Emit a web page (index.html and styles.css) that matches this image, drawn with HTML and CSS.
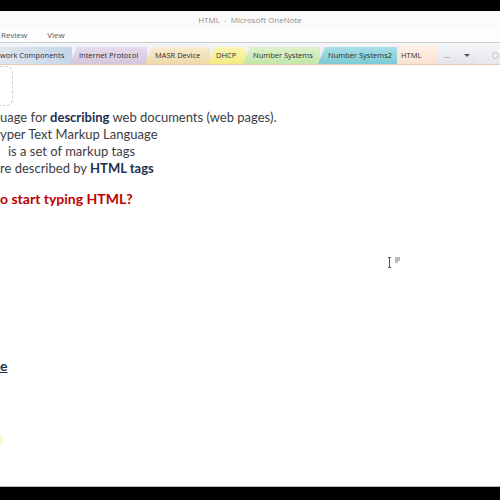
FILE: index.html
```html
<!DOCTYPE html>
<html>
<head>
<meta charset="utf-8">
<link rel="stylesheet" href="styles.css">
</head>
<body>
<div class="screen">
  <div class="blackbar"></div>
  <div class="titlebar">HTML&nbsp; - &nbsp;Microsoft OneNote</div>
  <div class="menubar"><span class="menu">Review</span><span class="menu">View</span></div>
  <div class="tabs">
    <div class="tab t-net first">work Components</div>
    <div class="tab t-ip">Internet Protocol</div>
    <div class="tab t-masr">MASR Device</div>
    <div class="tab t-dhcp">DHCP</div>
    <div class="tab t-ns">Number Systems</div>
    <div class="tab t-ns2">Number Systems2</div>
    <div class="tab t-html">HTML</div>
    <div class="tab t-more">...<span class="arrow"></span></div>
    <div class="tab t-new"><span class="dot"></span></div>
  </div>
  <div class="page">
    <div class="titlebox"></div>
    <div class="lines">
      <p class="line">uage for <b>describing</b> web documents (web pages).</p>
      <p class="line">yper Text Markup Language</p>
      <p class="line indent">is a set of markup tags</p>
      <p class="line">re described by <b>HTML tags</b></p>
      <p class="question">o start typing HTML?</p>
    </div>
    <div class="cursor">
      <svg width="14" height="13" viewBox="0 0 14 13"><path d="M1 1.5h3M2.5 1.5v10M1 11.5h3" stroke="#555" stroke-width="1" fill="none"/><path d="M8 2h5M8 4h5M8 6h3" stroke="#777" stroke-width="1.2"/></svg>
    </div>
    <p class="link">e</p>
    <div class="smudge"></div>
  </div>
  <div class="bottombar"></div>
</div>
</body>
</html>
```
FILE: styles.css
```css
html, body { margin: 0; padding: 0; background: #000; }
.screen {
  width: 500px; height: 500px; overflow: hidden;
  display: flex; flex-direction: column; background: #fff;
  font-family: "Segoe UI", "Open Sans", "DejaVu Sans", sans-serif;
}
.blackbar { height: 11px; background: #000; flex: none; }
.titlebar {
  height: 17px; flex: none; background: #fbfbfb;
  text-align: center; font-size: 8px; line-height: 17px; color: #8c8c8c;
}
.menubar {
  height: 14px; flex: none; background: #fdfdfd;
  display: flex; gap: 20px; padding-left: 1px;
  font-size: 8px; line-height: 14px; color: #5a5a5a;
  border-bottom: 1px solid #c9ccd1;
}
.tabs {
  height: 19px; flex: none; display: flex; align-items: flex-end;
  background: linear-gradient(#f4f5f7, #e6e8ec);
  border-bottom: 1px solid #efc9ac;
  padding-top: 2px;
}
.tab {
  height: 17px; flex: none; font-size: 7.5px; line-height: 17px; color: #2e2e2e;
  padding: 0 0 0 9px; margin-right: -2px; white-space: nowrap; overflow: hidden;
  clip-path: polygon(0 100%, 7px 0, 100% 0, 100% 100%);
  box-sizing: border-box;
}
.tab.first { clip-path: none; padding-left: 0; width: 72px; }
.t-net { background: linear-gradient(90deg, #dfe6ee, #c3d6ea); }
.t-ip { width: 77px; background: linear-gradient(#e6dcec, #d4c5dc); padding-left: 9px; }
.t-masr { width: 65px; background: linear-gradient(#f8ecd0, #f0d8aa); padding-left: 10px; }
.t-dhcp { width: 37px; background: linear-gradient(#fbf6b4, #f3ea82); padding-left: 8px; }
.t-ns { width: 77px; background: linear-gradient(#def2cc, #c4e6a8); padding-left: 10px; }
.t-ns2 { width: 79px; background: linear-gradient(#a9dfe8, #7ccad6); padding-left: 10px; }
.t-html { width: 43px; height: 19px; padding-top: 2px; background: linear-gradient(#fdf1e8, #fbe2d0); padding-left: 6px; clip-path: none; }
.t-more {
  width: 40px; background: linear-gradient(#f2f3f5, #e3e5e9); color: #666;
  padding-left: 8px; display: flex; align-items: center; gap: 14px;
}
.arrow { width: 0; height: 0; border-left: 3px solid transparent; border-right: 3px solid transparent; border-top: 3px solid #555; }
.t-new { width: 30px; margin-left: 4px; background: linear-gradient(#f4f5f7, #e6e8ec); display: flex; align-items: center; padding-left: 14px; }
.dot { width: 5px; height: 5px; border-radius: 50%; border: 1px solid #c4c4c4; }

.page { flex: 1; position: relative; background: #fff; }
.titlebox {
  width: 12px; height: 38px; margin-top: 1px;
  border: 1px dashed #cfcfcf; border-left: none; border-radius: 0 7px 7px 0;
}
.lines {
  margin-top: 3px;
  font-family: Lato, "Open Sans", sans-serif; font-size: 13px; color: #3c3c44;
}
.line { margin: 0; line-height: 17px; white-space: nowrap; }
.line b { color: #1f2f50; }
.indent { padding-left: 8px; }
.question {
  margin: 13px 0 0; font-size: 14px; font-weight: bold; color: #c00000; line-height: 18px;
}
.cursor { position: absolute; left: 387px; top: 187px; }
.link {
  position: absolute; left: 0; top: 292px; margin: 0;
  font-family: Lato, sans-serif; font-size: 14px; font-weight: bold; color: #1f2f50;
  text-decoration: underline; line-height: 17px;
}
.smudge { position: absolute; left: 0; top: 370px; width: 3px; height: 10px; background: #fbf6dc; }
.bottombar { height: 13px; flex: none; background: #000; border-top: 1px solid #b8b8b8; }
```
